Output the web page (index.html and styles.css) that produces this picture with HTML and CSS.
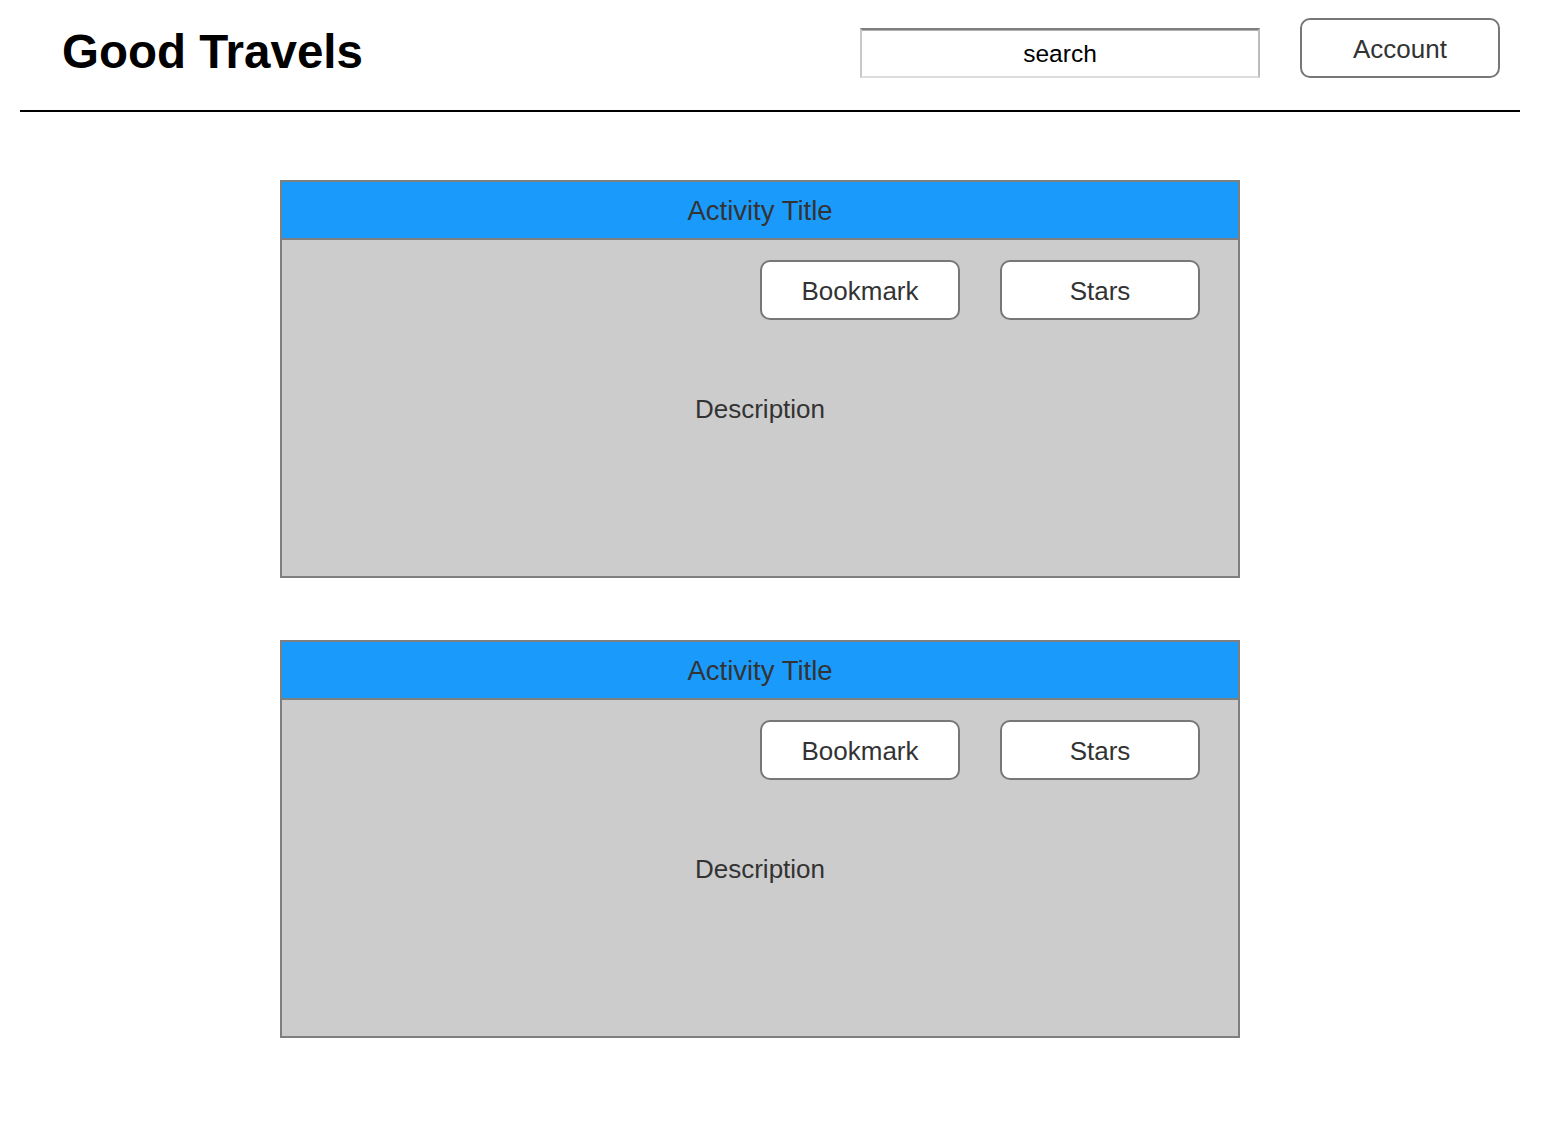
FILE: index.html
```html
<!DOCTYPE html>
<html lang="en">
<head>
<meta charset="utf-8">
<title>Good Travels</title>
<link rel="stylesheet" href="styles.css">
</head>
<body>
<header class="topbar">
  <h1 class="brand">Good Travels</h1>
  <div class="search">search</div>
  <button class="btn account">Account</button>
</header>
<main class="list">
  <section class="card">
    <div class="card-title">Activity Title</div>
    <div class="card-body">
      <div class="actions">
        <button class="btn">Bookmark</button>
        <button class="btn">Stars</button>
      </div>
      <p class="desc">Description</p>
    </div>
  </section>
  <section class="card">
    <div class="card-title">Activity Title</div>
    <div class="card-body">
      <div class="actions">
        <button class="btn">Bookmark</button>
        <button class="btn">Stars</button>
      </div>
      <p class="desc">Description</p>
    </div>
  </section>
</main>
</body>
</html>
```
FILE: styles.css
```css
* { box-sizing: border-box; }
body {
  margin: 0;
  background: #fff;
  font-family: "Liberation Sans", Arial, Helvetica, sans-serif;
  color: #333;
}
.topbar {
  margin: 0 38px 0 20px;
  height: 112px;
  border-bottom: 2px solid #000;
  display: flex;
  align-items: flex-start;
  padding: 0 0 0 42px;
}
.brand {
  margin: 28px 0 0 0;
  font-size: 47.5px;
  line-height: 48px;
  font-weight: bold;
  color: #000;
  flex: 1;
}
.search {
  margin-top: 28px;
  width: 400px;
  height: 50px;
  padding-top: 2px;
  border-style: solid;
  border-width: 2px;
  border-color: #7f7f7f #bdbdbd #dcdcdc #c8c8c8;
  box-shadow: inset 0 1px 0 #b0b0b0;
  display: flex;
  align-items: center;
  justify-content: center;
  font-size: 24.5px;
  color: #000;
}
.btn {
  width: 200px;
  height: 60px;
  border: 2px solid #777;
  border-radius: 10px;
  background: #fff;
  font-family: "Liberation Sans", Arial, Helvetica, sans-serif;
  font-size: 26px;
  color: #333;
  padding: 2px 0 0 0;
}
.account {
  margin: 18px 20px 0 40px;
  font-size: 26px;
}
.list {
  padding: 68px 0 0 280px;
  display: flex;
  flex-direction: column;
  gap: 62px;
}
.card {
  width: 960px;
  border: 2px solid #7f7f7f;
  background: #ccc;
}
.card-title {
  height: 58px;
  padding-top: 2px;
  background: #1a9bfc;
  border-bottom: 2px solid #7f7f7f;
  display: flex;
  align-items: center;
  justify-content: center;
  font-size: 27.5px;
  color: #333;
}
.card-body {
  height: 336px;
  padding: 20px 38px 0 0;
}
.actions {
  display: flex;
  justify-content: flex-end;
  gap: 40px;
}
.desc {
  margin: 74px 0 0 38px;
  font-size: 26px;
  line-height: 30px;
  text-align: center;
}
```
